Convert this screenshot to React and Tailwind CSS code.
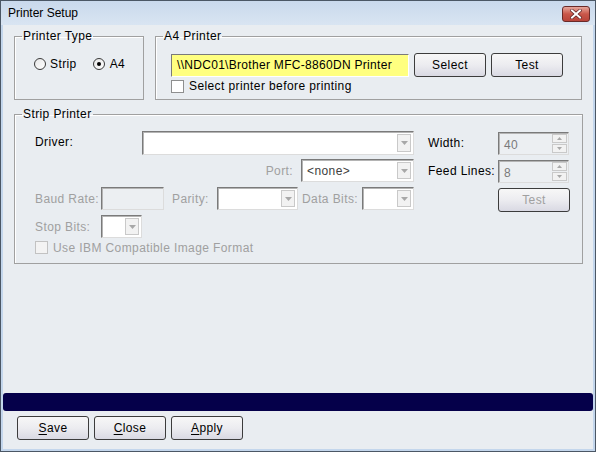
import React from 'react';

// Small Win7-ish building blocks
function Btn({ children, w = 'w-[72px]', disabled = false }) {
  return (
    <button
      className={`${w} h-[24px] shrink-0 rounded-[3px] border border-[#3c3c3c] bg-gradient-to-b from-[#f7f7f7] via-[#ececf0] to-[#d9d9e3] text-[12px] ${disabled ? 'text-[#a0a0a0]' : 'text-black'}`}
    >
      {children}
    </button>
  );
}

function Arrow({ disabled }) {
  return (
    <span className="absolute right-[2px] top-[2px] bottom-[2px] w-[14px] flex items-center justify-center border border-[#c9c9c9] bg-[#f2f2f2]">
      <svg width="7" height="4" viewBox="0 0 7 4">
        <path d="M0 0h7L3.5 4z" fill={disabled ? '#a8a8a8' : '#606060'} />
      </svg>
    </span>
  );
}

function Combo({ w, h = 'h-[23px]', value, muted = true }) {
  return (
    <div
      className={`relative ${w} ${h} shrink-0 bg-white border border-t-[#7a7a7a] border-l-[#7a7a7a] border-r-[#dcdcdc] border-b-[#dcdcdc] shadow-[inset_1px_1px_0_#b4b4b4] flex items-center pl-[5px] text-[12px] text-[#404040]`}
    >
      {value}
      <Arrow disabled={muted} />
    </div>
  );
}

function Spin({ value }) {
  return (
    <div className="relative w-[71px] h-[23px] shrink-0 bg-[#eceff2] border border-t-[#7a7a7a] border-l-[#7a7a7a] border-r-[#dcdcdc] border-b-[#dcdcdc] shadow-[inset_1px_1px_0_#b4b4b4] flex items-center pl-[5px] pt-[2px] text-[12px] text-[#7a7a7a]">
      {value}
      <div className="absolute right-[1px] top-[1px] bottom-[1px] w-[15px] flex flex-col gap-[1px]">
        <span className="flex-1 flex items-center justify-center border border-[#c9c9c9] bg-[#f2f2f2]">
          <svg width="5" height="3" viewBox="0 0 5 3"><path d="M2.5 0L5 3H0z" fill="#a8a8a8" /></svg>
        </span>
        <span className="flex-1 flex items-center justify-center border border-[#c9c9c9] bg-[#f2f2f2]">
          <svg width="5" height="3" viewBox="0 0 5 3"><path d="M0 0h5L2.5 3z" fill="#a8a8a8" /></svg>
        </span>
      </div>
    </div>
  );
}

function Radio({ checked }) {
  return (
    <span className="w-[12px] h-[12px] rounded-full border border-[#3a3a3a] bg-gradient-to-br from-[#e6e6e6] to-white flex items-center justify-center shrink-0">
      {checked && <span className="w-[4px] h-[4px] rounded-full bg-black" />}
    </span>
  );
}

export default function App() {
  return (
    <div className="w-[596px] h-[452px] border border-[#4b5765] bg-[#c3d6ec] px-[2px] pb-[2px] flex flex-col font-['Liberation_Sans',Arial,sans-serif] text-[12px] text-black tracking-[0.4px]">
      {/* Title bar */}
      <div className="h-[24px] shrink-0 flex items-center justify-between bg-gradient-to-b from-[#c9d9ec] to-[#d9e5f2] -mx-[2px] pl-[7px] pr-[5px]">
        <span className="tracking-normal">Printer Setup</span>
        <span className="w-[28px] h-[16px] mt-[1px] rounded-[3px] border border-[#6a2a28] bg-gradient-to-b from-[#e5a69c] via-[#c9574a] to-[#b8443a] flex items-center justify-center">
          <svg width="12" height="10" viewBox="0 0 12 10">
            <path d="M2 1.5L10 8.5M10 1.5L2 8.5" stroke="#5a2020" strokeWidth="3.4" strokeLinecap="square" />
            <path d="M2 1.5L10 8.5M10 1.5L2 8.5" stroke="#fff" strokeWidth="2" strokeLinecap="square" />
          </svg>
        </span>
      </div>

      {/* Client */}
      <div className="flex-1 bg-[#e9edf1] flex flex-col">
        <div className="flex gap-[11px] pl-[11px] mt-[4px]">
          {/* Printer Type */}
          <fieldset className="w-[130px] h-[71px] border border-[#a0a0a0] shadow-[inset_1px_1px_0_#fff]">
            <legend className="ml-[7px] px-[1px] leading-[14px]">Printer Type</legend>
            <div className="mt-[14px] h-[14px] flex items-center pl-[19px]">
              <Radio />
              <span className="ml-[4px]">Strip</span>
              <span className="ml-[16px] flex items-center">
                <Radio checked />
                <span className="ml-[5px]">A4</span>
              </span>
            </div>
          </fieldset>

          {/* A4 Printer */}
          <fieldset className="w-[427px] h-[71px] border border-[#a0a0a0] shadow-[inset_1px_1px_0_#fff]">
            <legend className="ml-[7px] px-[1px] leading-[14px]">A4 Printer</legend>
            <div className="mt-[10px] h-[24px] flex items-center pl-[15px]">
              <div className="w-[238px] h-[23px] bg-[#ffff80] border border-t-[#7a7a7a] border-l-[#7a7a7a] border-r-[#fff] border-b-[#fff] flex items-center pl-[5px] tracking-[0.3px]">
                \\NDC01\Brother MFC-8860DN Printer
              </div>
              <div className="ml-[5px] flex gap-[5px]">
                <Btn>Select</Btn>
                <Btn>Test</Btn>
              </div>
            </div>
            <div className="mt-[2px] h-[14px] flex items-center pl-[15px]">
              <span className="w-[13px] h-[13px] border border-[#8e8f8f] bg-white shrink-0" />
              <span className="ml-[5px]">Select printer before printing</span>
            </div>
          </fieldset>
        </div>

        {/* Strip Printer */}
        <fieldset className="ml-[11px] mt-[7px] w-[569px] h-[157px] border border-[#a0a0a0] shadow-[inset_1px_1px_0_#fff]">
          <legend className="ml-[7px] px-[1px] leading-[14px]">Strip Printer</legend>
          <div className="flex pl-[20px]">
            {/* left column */}
            <div className="w-[379px] mt-[10px] flex flex-col text-[#a0a0a0]">
              <div className="h-[24px] flex items-start">
                <span className="w-[107px] pt-[2px] text-black">Driver:</span>
                <Combo w="w-[272px]" h="h-[24px]" />
              </div>
              <div className="h-[23px] mt-[4px] flex items-center justify-end">
                <span className="mr-[8px]">Port:</span>
                <Combo w="w-[113px]" value="<none>" />
              </div>
              <div className="h-[23px] mt-[5px] flex items-center">
                <span className="w-[66px]">Baud Rate:</span>
                <div className="w-[63px] h-[23px] shrink-0 bg-[#eceff2] border border-t-[#7a7a7a] border-l-[#7a7a7a] border-r-[#dcdcdc] border-b-[#dcdcdc] shadow-[inset_1px_1px_0_#b4b4b4]" />
                <span className="w-[45px] ml-[8px]">Parity:</span>
                <Combo w="w-[81px]" />
                <span className="w-[60px] ml-[4px]">Data Bits:</span>
                <Combo w="w-[52px]" />
              </div>
              <div className="h-[23px] mt-[5px] flex items-center">
                <span className="w-[66px]">Stop Bits:</span>
                <Combo w="w-[41px]" />
              </div>
              <div className="h-[13px] mt-[3px] flex items-center">
                <span className="w-[13px] h-[13px] border border-[#c2c2c2] bg-[#f3f3f3] shrink-0" />
                <span className="ml-[5px]">Use IBM Compatible Image Format</span>
              </div>
            </div>

            {/* right column */}
            <div className="ml-[14px] mt-[11px] flex flex-col">
              <div className="h-[23px] flex items-start">
                <span className="w-[70px] pt-[2px]">Width:</span>
                <Spin value="40" />
              </div>
              <div className="h-[23px] mt-[5px] flex items-start">
                <span className="w-[70px] pt-[2px]">Feed Lines:</span>
                <Spin value="8" />
              </div>
              <div className="mt-[5px] pl-[70px]">
                <Btn disabled>Test</Btn>
              </div>
            </div>
          </div>
        </fieldset>

        {/* Progress bar */}
        <div className="mt-auto h-[18px] rounded-[3px] bg-[#05004a]" />

        {/* Bottom buttons */}
        <div className="mt-[5px] mb-[9px] pl-[14px] flex gap-[5px]">
          <Btn><span className="underline underline-offset-2">S</span>ave</Btn>
          <Btn><span className="underline underline-offset-2">C</span>lose</Btn>
          <Btn><span className="underline underline-offset-2">A</span>pply</Btn>
        </div>
      </div>
    </div>
  );
}
